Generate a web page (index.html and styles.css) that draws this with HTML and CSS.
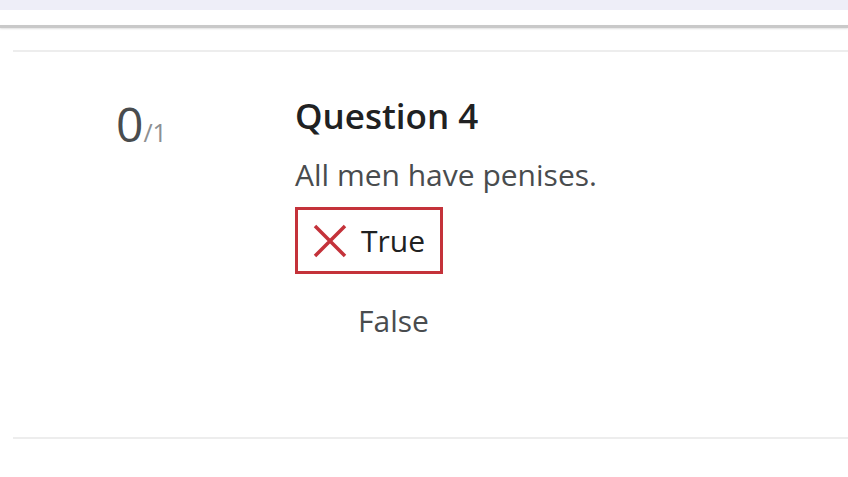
FILE: index.html
```html
<!DOCTYPE html>
<html>
<head>
<meta charset="utf-8">
<link rel="stylesheet" href="styles.css">
</head>
<body>
<div class="topband"></div>
<div class="divider"></div>
<div class="question">
  <div class="score"><span class="got">0</span><span class="out">/1</span></div>
  <div class="content">
    <h2 class="title">Question 4</h2>
    <p class="prompt">All men have penises.</p>
    <div class="options">
      <div class="option wrong">
        <svg class="xicon" width="36" height="36" viewBox="0 0 36 36"><path d="M3 3 L33 33 M33 3 L3 33" stroke="#c4323a" stroke-width="3.5" fill="none"/></svg>
        <span>True</span>
      </div>
      <div class="option plain"><span>False</span></div>
    </div>
  </div>
</div>
</body>
</html>
```
FILE: styles.css
```css
html, body { margin: 0; padding: 0; background: #fff; }
body { font-family: "Open Sans", "Liberation Sans", sans-serif; color: #494c4e; width: 848px; height: 477px; overflow: hidden; }
.topband { height: 10px; background: #eeeef8; }
.divider { margin-top: 15px; height: 3px; background: #c9c9c9; box-shadow: 0 1px 2px rgba(0,0,0,0.12); }
.question { margin: 22px 0 0 13px; border-top: 2px solid #ededed; border-bottom: 2px solid #ededed; height: 385px; display: flex; }
.score { width: 282px; padding: 48px 0 0 103px; box-sizing: border-box; display: flex; align-items: baseline; align-self: flex-start; line-height: 1; }
.got { font-size: 48px; color: #494c4e; }
.out { font-size: 25px; color: #8c8f92; }
.content { padding-top: 42px; }
.title { margin: 0; font-size: 35px; font-weight: 600; color: #202122; line-height: 44px; }
.prompt { margin: 17px 0 0; font-size: 30px; line-height: 40px; }
.options { margin-top: 12px; }
.option { display: flex; align-items: center; gap: 13px; font-size: 30px; line-height: 40px; color: #202122; }
.option.wrong { border: 3px solid #c4323a; width: 148px; height: 67px; box-sizing: border-box; padding-left: 14px; }
.option.plain { margin-top: 27px; padding-left: 63px; color: #494c4e; }
```
